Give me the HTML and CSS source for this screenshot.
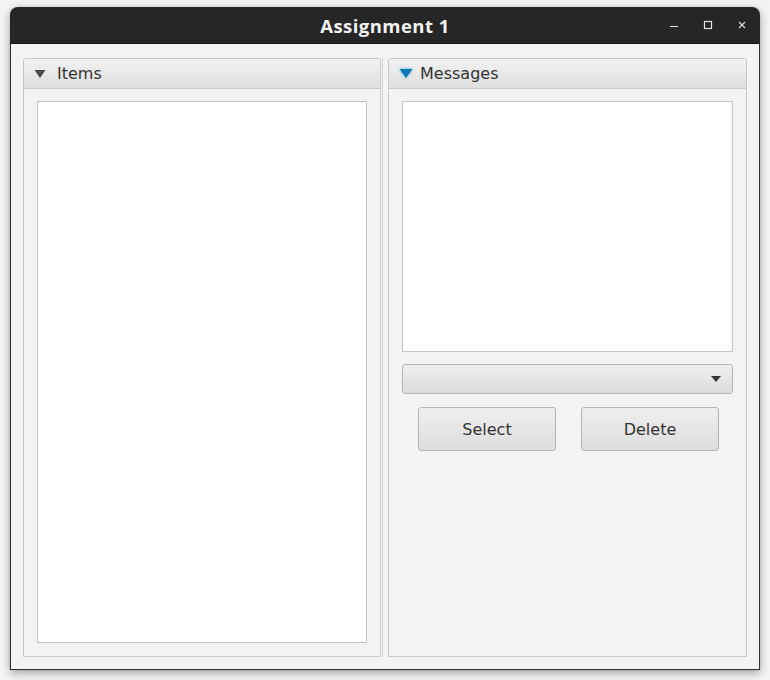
FILE: index.html
```html
<!DOCTYPE html>
<html>
<head>
<meta charset="utf-8">
<link rel="stylesheet" href="styles.css">
</head>
<body>
<div class="window">
  <div class="titlebar">
    <div></div>
    <div class="title">Assignment 1</div>
    <div class="controls">
      <svg class="ctl" width="12" height="12" viewBox="0 0 12 12"><path d="M2 7.5h8" stroke="#e6e6e6" stroke-width="1.2"/></svg>
      <svg class="ctl" width="12" height="12" viewBox="0 0 12 12"><rect x="2.5" y="2.5" width="7" height="7" fill="none" stroke="#e6e6e6" stroke-width="1.2"/></svg>
      <svg class="ctl" width="12" height="12" viewBox="0 0 12 12"><path d="M3 3l6 6M9 3l-6 6" stroke="#d8d8d8" stroke-width="1.2"/></svg>
    </div>
  </div>
  <div class="content">
    <div class="split">
      <section class="pane">
        <header class="pane-head">
          <svg class="arrow" width="12" height="10" viewBox="0 0 12 10"><polygon points="0.5,1 11.5,1 6,9" fill="#4a4a4a"/></svg>
          <span>Items</span>
        </header>
        <div class="pane-body">
          <div class="list list-tall"></div>
        </div>
      </section>
      <div class="divider"></div>
      <section class="pane">
        <header class="pane-head">
          <svg class="arrow focus" width="16" height="13" viewBox="0 0 16 13"><polygon points="1.5,2 14.5,2 8,11" fill="#1277b5"/></svg>
          <span>Messages</span>
        </header>
        <div class="pane-body">
          <div class="list list-short"></div>
          <div class="combo">
            <svg width="10" height="6" viewBox="0 0 10 6"><polygon points="0,0 10,0 5,6" fill="#333"/></svg>
          </div>
          <div class="buttons">
            <button class="btn">Select</button>
            <button class="btn">Delete</button>
          </div>
        </div>
      </section>
    </div>
  </div>
</div>
</body>
</html>
```
FILE: styles.css
```css
* { box-sizing: border-box; }
html, body { margin: 0; padding: 0; }
body {
  width: 770px;
  height: 680px;
  background: #f4f4f4;
  font-family: "DejaVu Sans", sans-serif;
  overflow: hidden;
}
.window {
  margin: 7px 0 0 10px;
  width: 750px;
  height: 663px;
  border-radius: 8px 8px 0 0;
  display: flex;
  flex-direction: column;
  box-shadow: 0 3px 10px rgba(0,0,0,0.35), 0 0 1px rgba(0,0,0,0.4);
  overflow: hidden;
}
.titlebar {
  height: 37px;
  flex: 0 0 37px;
  background: #262626;
  display: grid;
  grid-template-columns: 1fr auto 1fr;
  align-items: center;
  border-bottom: 1px solid #151515;
}
.title {
  font-family: "Open Sans", "DejaVu Sans", sans-serif;
  font-weight: 700;
  font-size: 18.5px;
  letter-spacing: 0.45px;
  color: #f2f2f2;
  padding-top: 1px;
}
.controls {
  display: flex;
  justify-content: flex-end;
  align-items: center;
  gap: 22px;
  padding-right: 12px;
}
.ctl { display: block; }
.content {
  flex: 1;
  background: #f3f3f3;
  border: 1px solid #2e2e2e;
  border-top: none;
  padding: 14px 12px 12px 12px;
  display: flex;
}
.split {
  flex: 1;
  display: grid;
  grid-template-columns: 358px 7px 1fr;
}
.divider {
  border-left: 1px solid #d4d4d4;
  margin-left: 1px;
}
.pane {
  display: flex;
  flex-direction: column;
  border: 1px solid #c8c8c8;
  border-radius: 3px 3px 0 0;
  background: #f3f3f3;
}
.pane-head {
  height: 30px;
  flex: 0 0 30px;
  display: flex;
  align-items: center;
  padding-left: 10px;
  gap: 11px;
  background: linear-gradient(#f1f1f1, #dfdfdf);
  border-bottom: 1px solid #c8c8c8;
  border-radius: 2px 2px 0 0;
  font-size: 16px;
  color: #333;
}
.pane-head span { margin-top: -1px; }
.arrow { display: block; }
.arrow.focus {
  margin-left: -1px;
  margin-right: -5px;
  filter: drop-shadow(0 0 1.5px #3ab8f5);
}
.pane-body {
  flex: 1;
  padding: 12px 13px 13px 13px;
  display: flex;
  flex-direction: column;
}
.list {
  background: #fff;
  border: 1px solid #c4c4c4;
}
.list-tall { flex: 1; }
.list-short { height: 251px; }
.combo {
  margin-top: 12px;
  height: 30px;
  border: 1px solid #b4b4b4;
  border-radius: 3px;
  background: linear-gradient(#efefef, #dcdcdc);
  display: flex;
  align-items: center;
  justify-content: flex-end;
  padding-right: 11px;
}
.combo svg { display: block; }
.buttons {
  margin-top: 13px;
  display: flex;
  justify-content: center;
  gap: 25px;
  padding-left: 2px;
}
.btn {
  width: 138px;
  height: 44px;
  border: 1px solid #b4b4b4;
  border-radius: 3px;
  background: linear-gradient(#efefef, #dddddd);
  font-family: "DejaVu Sans", sans-serif;
  font-size: 16px;
  color: #333;
  padding: 0;
}
```
